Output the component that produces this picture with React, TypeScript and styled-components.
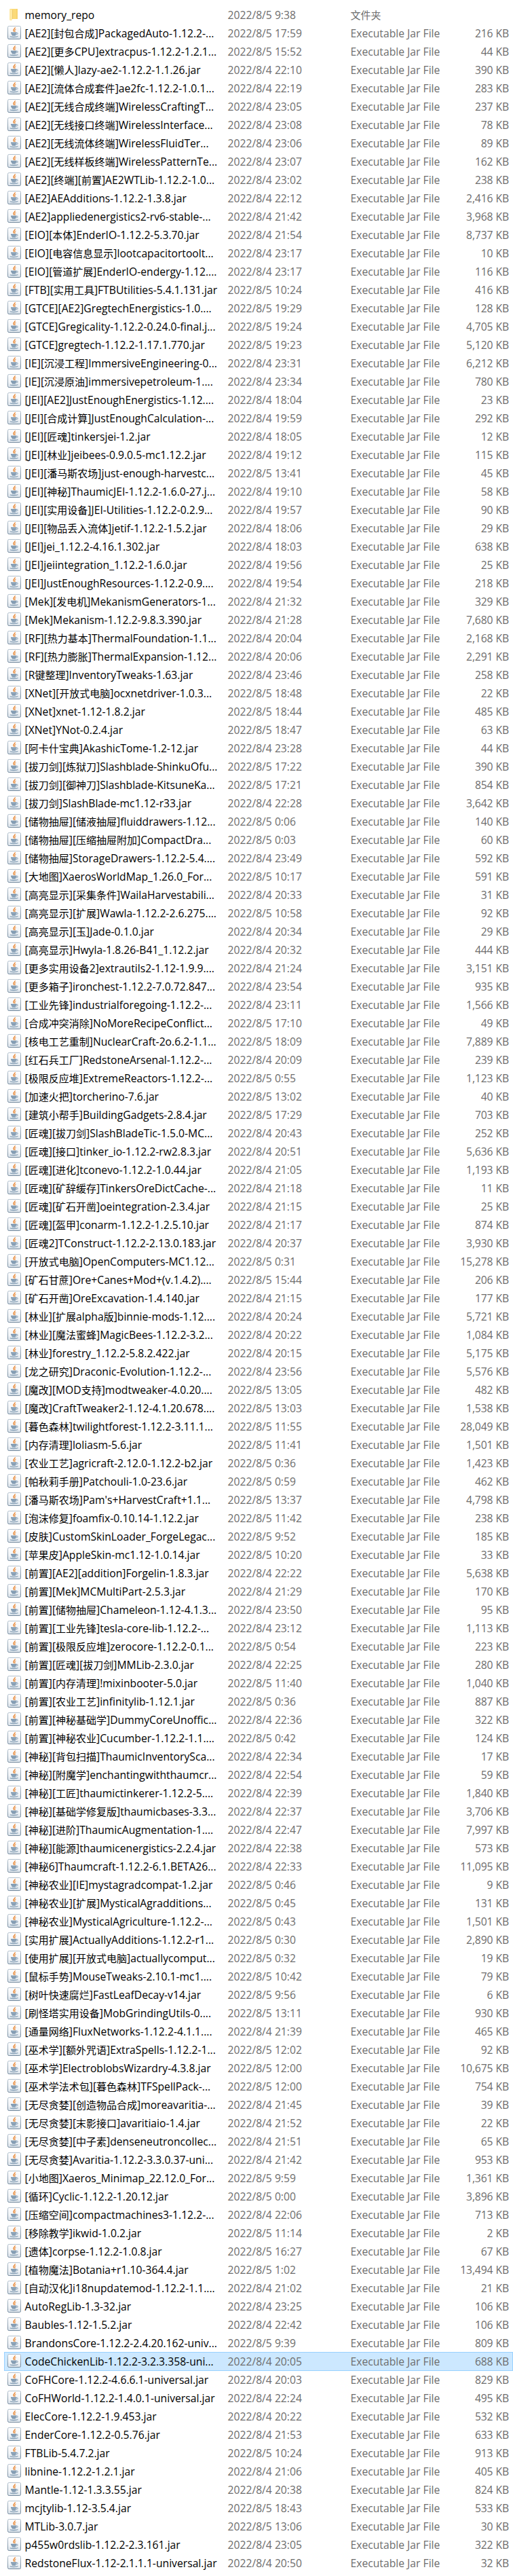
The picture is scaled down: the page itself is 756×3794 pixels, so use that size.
import React from "react";
import styled, { createGlobalStyle, css } from "styled-components";

type Entry = [name: string, modified: string, sizeKb?: string];

const entries: Entry[] = [
  ["memory_repo", "2022/8/5 9:38"],
  ["[AE2][封包合成]PackagedAuto-1.12.2-...", "2022/8/5 17:59", "216"],
  ["[AE2][更多CPU]extracpus-1.12.2-1.2.1...", "2022/8/5 15:52", "44"],
  ["[AE2][懒人]lazy-ae2-1.12.2-1.1.26.jar", "2022/8/4 22:10", "390"],
  ["[AE2][流体合成套件]ae2fc-1.12.2-1.0.1...", "2022/8/4 22:19", "283"],
  ["[AE2][无线合成终端]WirelessCraftingT...", "2022/8/4 23:05", "237"],
  ["[AE2][无线接口终端]WirelessInterface...", "2022/8/4 23:08", "78"],
  ["[AE2][无线流体终端]WirelessFluidTer...", "2022/8/4 23:06", "89"],
  ["[AE2][无线样板终端]WirelessPatternTe...", "2022/8/4 23:07", "162"],
  ["[AE2][终端][前置]AE2WTLib-1.12.2-1.0...", "2022/8/4 23:02", "238"],
  ["[AE2]AEAdditions-1.12.2-1.3.8.jar", "2022/8/4 22:12", "2,416"],
  ["[AE2]appliedenergistics2-rv6-stable-...", "2022/8/4 21:42", "3,968"],
  ["[EIO][本体]EnderIO-1.12.2-5.3.70.jar", "2022/8/4 21:54", "8,737"],
  ["[EIO][电容信息显示]lootcapacitortoolt...", "2022/8/4 23:17", "10"],
  ["[EIO][管道扩展]EnderIO-endergy-1.12....", "2022/8/4 23:17", "116"],
  ["[FTB][实用工具]FTBUtilities-5.4.1.131.jar", "2022/8/5 10:24", "416"],
  ["[GTCE][AE2]GregtechEnergistics-1.0....", "2022/8/5 19:29", "128"],
  ["[GTCE]Gregicality-1.12.2-0.24.0-final.j...", "2022/8/5 19:24", "4,705"],
  ["[GTCE]gregtech-1.12.2-1.17.1.770.jar", "2022/8/5 19:23", "5,120"],
  ["[IE][沉浸工程]ImmersiveEngineering-0...", "2022/8/4 23:31", "6,212"],
  ["[IE][沉浸原油]immersivepetroleum-1....", "2022/8/4 23:34", "780"],
  ["[JEI][AE2]JustEnoughEnergistics-1.12....", "2022/8/4 18:04", "23"],
  ["[JEI][合成计算]JustEnoughCalculation-...", "2022/8/4 19:59", "292"],
  ["[JEI][匠魂]tinkersjei-1.2.jar", "2022/8/4 18:05", "12"],
  ["[JEI][林业]jeibees-0.9.0.5-mc1.12.2.jar", "2022/8/4 19:12", "115"],
  ["[JEI][潘马斯农场]just-enough-harvestc...", "2022/8/5 13:41", "45"],
  ["[JEI][神秘]ThaumicJEI-1.12.2-1.6.0-27.j...", "2022/8/4 19:10", "58"],
  ["[JEI][实用设备]JEI-Utilities-1.12.2-0.2.9...", "2022/8/4 19:57", "90"],
  ["[JEI][物品丢入流体]jetif-1.12.2-1.5.2.jar", "2022/8/4 18:06", "29"],
  ["[JEI]jei_1.12.2-4.16.1.302.jar", "2022/8/4 18:03", "638"],
  ["[JEI]jeiintegration_1.12.2-1.6.0.jar", "2022/8/4 19:56", "25"],
  ["[JEI]JustEnoughResources-1.12.2-0.9....", "2022/8/4 19:54", "218"],
  ["[Mek][发电机]MekanismGenerators-1...", "2022/8/4 21:32", "329"],
  ["[Mek]Mekanism-1.12.2-9.8.3.390.jar", "2022/8/4 21:28", "7,680"],
  ["[RF][热力基本]ThermalFoundation-1.1...", "2022/8/4 20:04", "2,168"],
  ["[RF][热力膨胀]ThermalExpansion-1.12...", "2022/8/4 20:06", "2,291"],
  ["[R键整理]InventoryTweaks-1.63.jar", "2022/8/4 23:46", "258"],
  ["[XNet][开放式电脑]ocxnetdriver-1.0.3...", "2022/8/5 18:48", "22"],
  ["[XNet]xnet-1.12-1.8.2.jar", "2022/8/5 18:44", "485"],
  ["[XNet]YNot-0.2.4.jar", "2022/8/5 18:47", "63"],
  ["[阿卡什宝典]AkashicTome-1.2-12.jar", "2022/8/4 23:28", "44"],
  ["[拔刀剑][炼狱刀]Slashblade-ShinkuOfu...", "2022/8/5 17:22", "390"],
  ["[拔刀剑][御神刀]Slashblade-KitsuneKa...", "2022/8/5 17:21", "854"],
  ["[拔刀剑]SlashBlade-mc1.12-r33.jar", "2022/8/4 22:28", "3,642"],
  ["[储物抽屉][储液抽屉]fluiddrawers-1.12...", "2022/8/5 0:06", "140"],
  ["[储物抽屉][压缩抽屉附加]CompactDra...", "2022/8/5 0:03", "60"],
  ["[储物抽屉]StorageDrawers-1.12.2-5.4....", "2022/8/4 23:49", "592"],
  ["[大地图]XaerosWorldMap_1.26.0_For...", "2022/8/5 10:17", "591"],
  ["[高亮显示][采集条件]WailaHarvestabili...", "2022/8/4 20:33", "31"],
  ["[高亮显示][扩展]Wawla-1.12.2-2.6.275....", "2022/8/5 10:58", "92"],
  ["[高亮显示][玉]Jade-0.1.0.jar", "2022/8/4 20:34", "29"],
  ["[高亮显示]Hwyla-1.8.26-B41_1.12.2.jar", "2022/8/4 20:32", "444"],
  ["[更多实用设备2]extrautils2-1.12-1.9.9....", "2022/8/4 21:24", "3,151"],
  ["[更多箱子]ironchest-1.12.2-7.0.72.847...", "2022/8/4 23:54", "935"],
  ["[工业先锋]industrialforegoing-1.12.2-...", "2022/8/4 23:11", "1,566"],
  ["[合成冲突消除]NoMoreRecipeConflict...", "2022/8/5 17:10", "49"],
  ["[核电工艺重制]NuclearCraft-2o.6.2-1.1...", "2022/8/5 18:09", "7,889"],
  ["[红石兵工厂]RedstoneArsenal-1.12.2-...", "2022/8/4 20:09", "239"],
  ["[极限反应堆]ExtremeReactors-1.12.2-...", "2022/8/5 0:55", "1,123"],
  ["[加速火把]torcherino-7.6.jar", "2022/8/5 13:02", "40"],
  ["[建筑小帮手]BuildingGadgets-2.8.4.jar", "2022/8/5 17:29", "703"],
  ["[匠魂][拔刀剑]SlashBladeTic-1.5.0-MC...", "2022/8/4 20:43", "252"],
  ["[匠魂][接口]tinker_io-1.12.2-rw2.8.3.jar", "2022/8/4 20:51", "5,636"],
  ["[匠魂][进化]tconevo-1.12.2-1.0.44.jar", "2022/8/4 21:05", "1,193"],
  ["[匠魂][矿辞缓存]TinkersOreDictCache-...", "2022/8/4 21:18", "11"],
  ["[匠魂][矿石开凿]oeintegration-2.3.4.jar", "2022/8/4 21:15", "25"],
  ["[匠魂][盔甲]conarm-1.12.2-1.2.5.10.jar", "2022/8/4 21:17", "874"],
  ["[匠魂2]TConstruct-1.12.2-2.13.0.183.jar", "2022/8/4 20:37", "3,930"],
  ["[开放式电脑]OpenComputers-MC1.12...", "2022/8/5 0:31", "15,278"],
  ["[矿石甘蔗]Ore+Canes+Mod+(v.1.4.2)....", "2022/8/5 15:44", "206"],
  ["[矿石开凿]OreExcavation-1.4.140.jar", "2022/8/4 21:15", "177"],
  ["[林业][扩展alpha版]binnie-mods-1.12....", "2022/8/4 20:24", "5,721"],
  ["[林业][魔法蜜蜂]MagicBees-1.12.2-3.2...", "2022/8/4 20:22", "1,084"],
  ["[林业]forestry_1.12.2-5.8.2.422.jar", "2022/8/4 20:15", "5,175"],
  ["[龙之研究]Draconic-Evolution-1.12.2-...", "2022/8/4 23:56", "5,576"],
  ["[魔改][MOD支持]modtweaker-4.0.20....", "2022/8/5 13:05", "482"],
  ["[魔改]CraftTweaker2-1.12-4.1.20.678....", "2022/8/5 13:03", "1,538"],
  ["[暮色森林]twilightforest-1.12.2-3.11.1...", "2022/8/5 11:55", "28,049"],
  ["[内存清理]loliasm-5.6.jar", "2022/8/5 11:41", "1,501"],
  ["[农业工艺]agricraft-2.12.0-1.12.2-b2.jar", "2022/8/5 0:36", "1,423"],
  ["[帕秋莉手册]Patchouli-1.0-23.6.jar", "2022/8/5 0:59", "462"],
  ["[潘马斯农场]Pam's+HarvestCraft+1.1...", "2022/8/5 13:37", "4,798"],
  ["[泡沫修复]foamfix-0.10.14-1.12.2.jar", "2022/8/5 11:42", "238"],
  ["[皮肤]CustomSkinLoader_ForgeLegac...", "2022/8/5 9:52", "185"],
  ["[苹果皮]AppleSkin-mc1.12-1.0.14.jar", "2022/8/5 10:20", "33"],
  ["[前置][AE2][addition]Forgelin-1.8.3.jar", "2022/8/4 22:22", "5,638"],
  ["[前置][Mek]MCMultiPart-2.5.3.jar", "2022/8/4 21:29", "170"],
  ["[前置][储物抽屉]Chameleon-1.12-4.1.3...", "2022/8/4 23:50", "95"],
  ["[前置][工业先锋]tesla-core-lib-1.12.2-...", "2022/8/4 23:12", "1,113"],
  ["[前置][极限反应堆]zerocore-1.12.2-0.1...", "2022/8/5 0:54", "223"],
  ["[前置][匠魂][拔刀剑]MMLib-2.3.0.jar", "2022/8/4 22:25", "280"],
  ["[前置][内存清理]!mixinbooter-5.0.jar", "2022/8/5 11:40", "1,040"],
  ["[前置][农业工艺]infinitylib-1.12.1.jar", "2022/8/5 0:36", "887"],
  ["[前置][神秘基础学]DummyCoreUnoffic...", "2022/8/4 22:36", "322"],
  ["[前置][神秘农业]Cucumber-1.12.2-1.1....", "2022/8/5 0:42", "124"],
  ["[神秘][背包扫描]ThaumicInventorySca...", "2022/8/4 22:34", "17"],
  ["[神秘][附魔学]enchantingwiththaumcr...", "2022/8/4 22:54", "59"],
  ["[神秘][工匠]thaumictinkerer-1.12.2-5....", "2022/8/4 22:39", "1,840"],
  ["[神秘][基础学修复版]thaumicbases-3.3...", "2022/8/4 22:37", "3,706"],
  ["[神秘][进阶]ThaumicAugmentation-1....", "2022/8/4 22:47", "7,997"],
  ["[神秘][能源]thaumicenergistics-2.2.4.jar", "2022/8/4 22:38", "573"],
  ["[神秘6]Thaumcraft-1.12.2-6.1.BETA26...", "2022/8/4 22:33", "11,095"],
  ["[神秘农业][IE]mystagradcompat-1.2.jar", "2022/8/5 0:46", "9"],
  ["[神秘农业][扩展]MysticalAgradditions...", "2022/8/5 0:45", "131"],
  ["[神秘农业]MysticalAgriculture-1.12.2-...", "2022/8/5 0:43", "1,501"],
  ["[实用扩展]ActuallyAdditions-1.12.2-r1...", "2022/8/5 0:30", "2,890"],
  ["[使用扩展][开放式电脑]actuallycomput...", "2022/8/5 0:32", "19"],
  ["[鼠标手势]MouseTweaks-2.10.1-mc1....", "2022/8/5 10:42", "79"],
  ["[树叶快速腐烂]FastLeafDecay-v14.jar", "2022/8/5 9:56", "6"],
  ["[刷怪塔实用设备]MobGrindingUtils-0....", "2022/8/5 13:11", "930"],
  ["[通量网络]FluxNetworks-1.12.2-4.1.1....", "2022/8/4 21:39", "465"],
  ["[巫术学][额外咒语]ExtraSpells-1.12.2-1...", "2022/8/5 12:02", "92"],
  ["[巫术学]ElectroblobsWizardry-4.3.8.jar", "2022/8/5 12:00", "10,675"],
  ["[巫术学法术包][暮色森林]TFSpellPack-...", "2022/8/5 12:00", "754"],
  ["[无尽贪婪][创造物品合成]moreavaritia-...", "2022/8/4 21:45", "39"],
  ["[无尽贪婪][末影接口]avaritiaio-1.4.jar", "2022/8/4 21:52", "22"],
  ["[无尽贪婪][中子素]denseneutroncollec...", "2022/8/4 21:51", "65"],
  ["[无尽贪婪]Avaritia-1.12.2-3.3.0.37-uni...", "2022/8/4 21:42", "953"],
  ["[小地图]Xaeros_Minimap_22.12.0_For...", "2022/8/5 9:59", "1,361"],
  ["[循环]Cyclic-1.12.2-1.20.12.jar", "2022/8/5 0:00", "3,896"],
  ["[压缩空间]compactmachines3-1.12.2-...", "2022/8/4 22:06", "713"],
  ["[移除教学]ikwid-1.0.2.jar", "2022/8/5 11:14", "2"],
  ["[遗体]corpse-1.12.2-1.0.8.jar", "2022/8/5 16:27", "67"],
  ["[植物魔法]Botania+r1.10-364.4.jar", "2022/8/5 1:02", "13,494"],
  ["[自动汉化]i18nupdatemod-1.12.2-1.1....", "2022/8/4 21:02", "21"],
  ["AutoRegLib-1.3-32.jar", "2022/8/4 23:25", "106"],
  ["Baubles-1.12-1.5.2.jar", "2022/8/4 22:42", "106"],
  ["BrandonsCore-1.12.2-2.4.20.162-univ...", "2022/8/5 9:39", "809"],
  ["CodeChickenLib-1.12.2-3.2.3.358-uni...", "2022/8/4 20:05", "688"],
  ["CoFHCore-1.12.2-4.6.6.1-universal.jar", "2022/8/4 20:03", "829"],
  ["CoFHWorld-1.12.2-1.4.0.1-universal.jar", "2022/8/4 22:24", "495"],
  ["ElecCore-1.12.2-1.9.453.jar", "2022/8/4 20:22", "532"],
  ["EnderCore-1.12.2-0.5.76.jar", "2022/8/4 21:53", "633"],
  ["FTBLib-5.4.7.2.jar", "2022/8/5 10:24", "913"],
  ["libnine-1.12.2-1.2.1.jar", "2022/8/4 21:06", "405"],
  ["Mantle-1.12-1.3.3.55.jar", "2022/8/4 20:38", "824"],
  ["mcjtylib-1.12-3.5.4.jar", "2022/8/5 18:43", "533"],
  ["MTLib-3.0.7.jar", "2022/8/5 13:06", "30"],
  ["p455w0rdslib-1.12.2-2.3.161.jar", "2022/8/4 23:05", "322"],
  ["RedstoneFlux-1.12-2.1.1.1-universal.jar", "2022/8/4 20:50", "32"],
];

const selectedName = "CodeChickenLib-1.12.2-3.2.3.358-uni...";

const GlobalStyle = createGlobalStyle`
  body {
    margin: 0;
    background: #ffffff;
  }
`;

const FileList = styled.div`
  box-sizing: border-box;
  width: 756px;
  height: 3794px;
  padding: 9px 0 0 6px;
  overflow: hidden;
  background: #ffffff;
  font-family: "Open Sans", "Noto Sans", "Noto Sans CJK SC", sans-serif;
  font-size: 15.7px;
  line-height: 26px;
`;

const Row = styled.div<{ $selected: boolean }>`
  display: grid;
  grid-template-columns: 25px 299px 181px 145px 89px;
  align-items: start;
  height: 27px;
  padding-left: 5px;
  white-space: pre;
  ${({ $selected }) =>
    $selected &&
    css`
      background: #cce8ff;
      box-shadow: inset 1px 0 #99d1ff, inset -1px 0 #99d1ff, inset 0 -1px #99d1ff, 0 -1px #99d1ff;
    `}
`;

const IconCell = styled.span`
  display: flex;
  align-items: center;
  height: 24px;
`;

const NameCell = styled.span`
  padding-left: 0.6px;
  color: #000000;
`;

const DetailCell = styled.span`
  padding-left: 0.5px;
  color: #6d6d6d;
`;

const SizeCell = styled(DetailCell)`
  padding: 0;
  letter-spacing: -0.1px;
  text-align: right;
`;

const Han = styled.span`
  font-family: "Noto Sans CJK SC", sans-serif;
  font-size: 15px;
  line-height: 1;
`;

function Label({ text }: { text: string }) {
  return (
    <>
      {text.split(/([\u4e00-\u9fff]+)/).map((part, i) => (i % 2 ? <Han key={i}>{part}</Han> : part))}
    </>
  );
}

function FolderIcon() {
  return (
    <svg width="20" height="20" viewBox="0 0 20 20">
      <path d="M3.500 2h11.200v15H7z" fill="#fbda78" />
      <path d="M13.500 2h1.200v15h-1.200z" fill="#f3cb62" />
      <path d="M3 2.200l4.400 1.400v13.400L5.600 19.500 3 18.500z" fill="#ffe9a3" />
      <path d="M7 3.600h.8v13.400H7z" fill="#e9c462" />
    </svg>
  );
}

function JarIcon() {
  return (
    <svg width="20" height="20" viewBox="0 0 20 20" fill="none">
      <rect x="0.5" y="0.5" width="19" height="19" rx="1.8" fill="url(#paper)" stroke="url(#edge)" />
      <path d="M11.200 2.200c.7 1.700-3.100 2.900-2.300 4.700.2.600.8 1.100 1.200 1.900" stroke="#e8822c" strokeWidth="1.300" />
      <path d="M12.500 5.100c-2 .9-2.300 1.700-1.400 2.500.4.400.1 1-.4 1.400" stroke="#ec9850" strokeWidth="1.100" />
      <path d="M5 10.500h8.500M5.800 12.400h7M6.800 14.200h5.200" stroke="#64839f" strokeWidth="1.300" />
      <path d="M13.300 10.400c2.600-.6 2.600 2-.2 2.500" stroke="#7d98b0" />
      <path d="M4 15.700c1 1.300 9.200 1.200 11.300-.2" stroke="#7d98b0" strokeWidth="1.200" />
    </svg>
  );
}

function GradientDefs() {
  return (
    <svg width="0" height="0" style={{ display: "block" }}>
      <defs>
        <linearGradient id="paper" x1="0" y1="0" x2="0" y2="1">
          <stop offset="0" stopColor="#fdfdfe" />
          <stop offset="0.6" stopColor="#f1f4f7" />
          <stop offset="1" stopColor="#d8e1e9" />
        </linearGradient>
        <linearGradient id="edge" x1="0" y1="0" x2="0" y2="1">
          <stop offset="0" stopColor="#b4c2ce" />
          <stop offset="1" stopColor="#71879b" />
        </linearGradient>
      </defs>
    </svg>
  );
}

export default function App() {
  return (
    <>
      <GlobalStyle />
      <FileList>
        <GradientDefs />
        {entries.map(([name, modified, sizeKb]) => (
          <Row key={name} $selected={name === selectedName}>
            <IconCell>{sizeKb ? <JarIcon /> : <FolderIcon />}</IconCell>
            <NameCell>
              <Label text={name} />
            </NameCell>
            <DetailCell>{modified}</DetailCell>
            <DetailCell>
              <Label text={sizeKb ? "Executable Jar File" : "文件夹"} />
            </DetailCell>
            <SizeCell>{sizeKb ? `${sizeKb} KB` : ""}</SizeCell>
          </Row>
        ))}
      </FileList>
    </>
  );
}
